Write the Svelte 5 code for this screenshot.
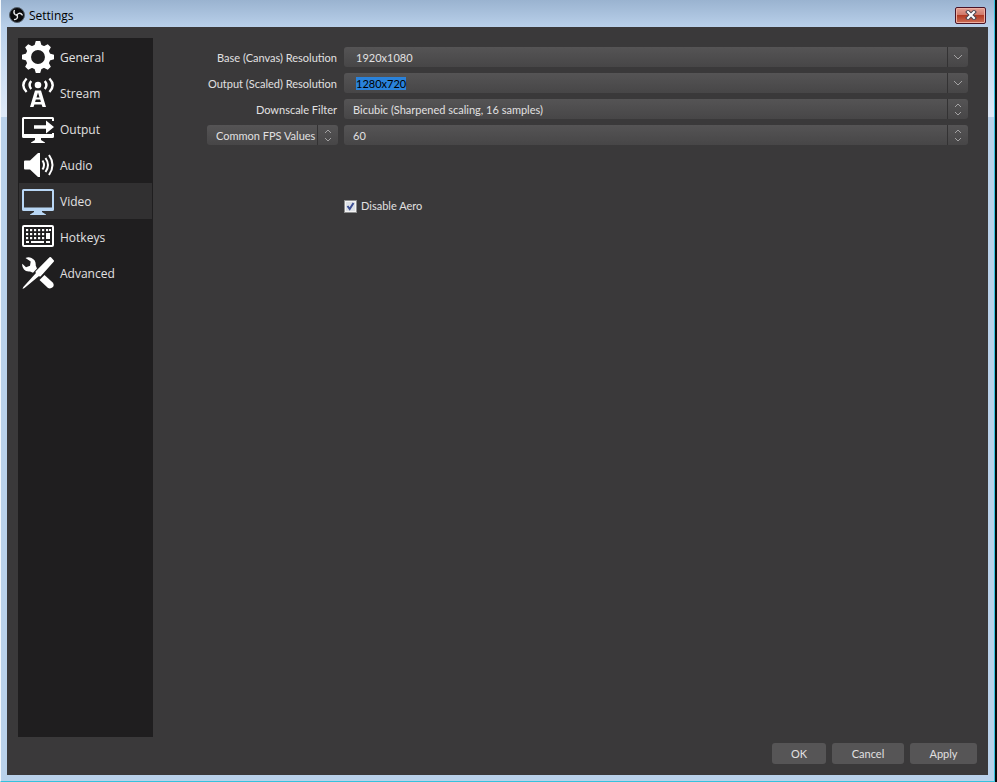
<script lang="ts">
  import { onMount } from 'svelte';

  const sections = ['General', 'Stream', 'Output', 'Audio', 'Video', 'Hotkeys', 'Advanced'];
  const toothAngles = [0, 45, 90, 135, 180, 225, 270, 315];
  const keys = [
    [4, 8], [8, 8], [12, 8], [16, 8], [20, 8], [24, 8],
    [4, 12], [8, 12], [12, 12], [16, 12], [20, 12],
    [4, 16], [8, 16], [12, 16], [16, 16], [20, 16],
  ];

  let active = $state('Video');
  let baseResolution = $state('1920x1080');
  let outputResolution = $state('1280x720');
  let disableAero = $state(true);
  let outputInput: HTMLInputElement;

  onMount(() => {
    outputInput.focus();
    outputInput.select();
  });
</script>

{#snippet chevron()}
  <svg class="arrow" viewBox="0 0 20 20" aria-hidden="true">
    <path d="M6 8l4 4 4-4" />
  </svg>
{/snippet}

{#snippet updown()}
  <svg class="arrow" viewBox="0 0 20 20" aria-hidden="true">
    <path d="M7 8l3-3 3 3M7 13l3 3 3-3" />
  </svg>
{/snippet}

{#snippet icon(name: string)}
  <svg class="icon" viewBox="0 0 32 32" aria-hidden="true">
    {#if name === 'General'}
      <circle cx="16" cy="16" r="9.700" fill="none" stroke="currentColor" stroke-width="5.500" />
      {#each toothAngles as angle (angle)}
        <path d="M13.800 0h4.400l1.800 6h-8z" transform="rotate({angle} 16 16)" />
      {/each}
    {:else if name === 'Stream'}
      <circle cx="16" cy="8" r="3.300" />
      <path
        d="M9.200 4q-3.200 4 0 8M22.800 4q3.200 4 0 8M4.600 1.500q-6.600 6.800 0 13.500M27.400 1.500q6.600 6.800 0 13.500"
        fill="none" stroke="currentColor" stroke-width="2.400"
      />
      <path
        fill-rule="evenodd"
        d="M13 13.500h6L24 30h-3.500l-.9-2.500h-7.200l-.9 2.500H8zM16 15.500l-1.500 5h3zM13.800 22.500l-.7 2.500h5.800l-.7-2.500z"
      />
    {:else if name === 'Output'}
      <path d="M32 8V5.500q0-1.500-1.500-1.500h-29Q0 4 0 5.500v18Q0 25 1.500 25h29q1.500 0 1.500-1.500V20h-2v1H2V6h28v2z" />
      <path d="M12 12.300h12V7.500l8 6.500-8 6.500v-4.800H12z" />
      <path d="M13 25h6v2l4 2.500V30H9v-.5l4-2.500z" />
    {:else if name === 'Audio'}
      <path d="M2 12.500q0-1 1-1h5L16 4h2v24h-2l-8-7.500H3q-1 0-1-1z" />
      <path
        d="M20.500 11.500q3 4.500 0 9M23.500 9q5 7 0 14M27 6q7 10 0 20"
        fill="none" stroke="currentColor" stroke-width="2"
      />
    {:else if name === 'Video'}
      <path fill-rule="evenodd" d="M1.500 4h29Q32 4 32 5.500v19q0 1.500-1.500 1.500h-29Q0 26 0 24.500v-19Q0 4 1.500 4zM2 6v16.500h28V6z" />
      <path d="M12 26h8v1l4 2.500V30H8v-.5l4-2.500z" />
    {:else if name === 'Hotkeys'}
      <rect x="1" y="5" width="30" height="20" rx="1" fill="none" stroke="currentColor" stroke-width="2" />
      {#each keys as [x, y]}
        <rect {x} {y} width="2.200" height="2.200" />
      {/each}
      <path d="M27 8h2v2h-2zM24 12h4v6h-4zM4 20h3v2H4zM9 20h13v2H9zM24 20h4v2h-4z" />
    {:else}
      <path d="M3.500 1Q6.500-.3 9.500 1q4.700 2.200 4.200 7.500l1.300 3-4 4.300-3-1.300q-4 .5-6-2Q-.3 9.500.3 6.800l3.700 3.400 4-1.400.7-4.300z" />
      <path d="M27.500.3q.8-.6 1.500 0l2.700 3q.6.700 0 1.500L18.500 19.500l-1.800-.3L2.500 31l-2 1L1.300 30 13.800 16.300l-.3-1.800z" />
      <path d="M17.500 23l5-5 8.200 7.500q1.800 2.200.3 4.500-2.500 2.200-5 1z" />
    {/if}
  </svg>
{/snippet}

<div class="window">
  <header class="titlebar">
    <svg class="logo" viewBox="0 0 16 16" aria-hidden="true">
      <circle cx="8" cy="8" r="7.500" fill="#0b0b0d" stroke="#55606c" />
      <g fill="none" stroke="#e8e8ea" stroke-width="1.300">
        <path d="M5.500 3q-1.500 3 .5 4.500Q7.500 8.500 9 7.300" />
        <path d="M5.500 3q-1.500 3 .5 4.500Q7.500 8.500 9 7.300" transform="rotate(120 8 8)" />
        <path d="M5.500 3q-1.500 3 .5 4.500Q7.500 8.500 9 7.300" transform="rotate(240 8 8)" />
      </g>
    </svg>
    <h1>Settings</h1>
    <button class="close" type="button" aria-label="Close">
      <svg viewBox="0 0 12 10" aria-hidden="true">
        <path d="M3 2l6 6M9 2L3 8" stroke="#4b4650" stroke-width="4" stroke-linecap="square" />
        <path d="M3 2l6 6M9 2L3 8" stroke="#fff" stroke-width="2" stroke-linecap="square" />
      </svg>
    </button>
  </header>

  <div class="dialog">
    <div class="body">
      <nav>
        {#each sections as name (name)}
          <button
            type="button"
            class:active={active === name}
            aria-current={active === name ? 'page' : undefined}
            onclick={() => (active = name)}
          >
            {@render icon(name)}
            <span>{name}</span>
          </button>
        {/each}
      </nav>

      <form>
        <label for="base">Base (Canvas) Resolution</label>
        <div class="field editable">
          <input id="base" type="text" bind:value={baseResolution} />
          <button type="button" aria-label="Show base resolutions">{@render chevron()}</button>
        </div>

        <label for="output">Output (Scaled) Resolution</label>
        <div class="field editable">
          <input id="output" type="text" bind:value={outputResolution} bind:this={outputInput} />
          <button type="button" aria-label="Show output resolutions">{@render chevron()}</button>
        </div>

        <label for="filter">Downscale Filter</label>
        <div class="field">
          <select id="filter">
            <option>Bicubic (Sharpened scaling, 16 samples)</option>
          </select>
          {@render updown()}
        </div>

        <div class="field">
          <select aria-label="FPS type">
            <option>Common FPS Values</option>
          </select>
          {@render updown()}
        </div>
        <div class="field">
          <select aria-label="FPS">
            <option>60</option>
          </select>
          {@render updown()}
        </div>

        <label class="check">
          <input type="checkbox" bind:checked={disableAero} />
          <span>Disable Aero</span>
        </label>
      </form>
    </div>

    <footer>
      <button type="button" class="ok">OK</button>
      <button type="button" class="cancel">Cancel</button>
      <button type="button">Apply</button>
    </footer>
  </div>
</div>

<style>
  :global(body) { background: #08090b; }
  .window {
    box-sizing: border-box;
    min-height: 100vh;
    display: flex;
    flex-direction: column;
    margin-right: 2px;
    padding: 0 6px 6px;
    border: solid #35c1dd;
    border-width: 0 1px 1px 0;
    border-left: 1px solid #f4f8fc;
    background: linear-gradient(#9ab3d0 0, #b9d0ea 27px, #dfeaf8 117px, #b9d1ea 117px);
    font-family: "Open Sans", "Noto Sans", sans-serif;
    font-size: 12px;
  }
  button, input, select { font: inherit; color: inherit; }
  .titlebar {
    display: flex;
    align-items: center;
    height: 27px;
    padding: 3px 2px 0;
    box-sizing: border-box;
  }
  .logo { width: 16px; height: 16px; }
  h1 {
    flex: 1;
    margin: 0 0 0 4px;
    font-size: 12px;
    font-weight: 400;
    color: #000;
  }
  .close {
    display: grid;
    place-items: center;
    width: 31px;
    height: 17px;
    padding: 0;
    border: 1px solid #4a1426;
    border-radius: 2px;
    box-shadow: inset 0 0 0 1px #eeb0a2;
    background: linear-gradient(#e3a093 0, #d0796a 45%, #b23a22 50%, #cc6f58 100%);
  }
  .close svg { width: 12px; height: 10px; }
  .dialog {
    flex: 1;
    display: flex;
    flex-direction: column;
    gap: 6px;
    padding: 11px;
    background: #3a393a;
  }
  .body { flex: 1; display: flex; }
  nav {
    width: 133px;
    flex-shrink: 0;
    padding: 1px;
    background: #1f1e1f;
  }
  nav button {
    display: flex;
    align-items: center;
    gap: 6px;
    width: 100%;
    height: 36px;
    padding: 0 3px;
    border: none;
    background: none;
    color: #e1e0e1;
    text-align: left;
  }
  nav .active { background: #313031; }
  .icon { width: 32px; height: 32px; fill: currentColor; color: #fff; }
  .active .icon { color: #b9d7f5; }
  form {
    flex: 1;
    display: grid;
    grid-template-columns: 131px 1fr;
    grid-auto-rows: 20px;
    align-content: start;
    gap: 6px;
    padding: 9px 9px 0 54px;
    font-family: Lato, sans-serif;
    font-size: 11px;
    color: #e1e0e1;
  }
  form > label {
    line-height: 22px;
    padding-right: 1px;
    text-align: right;
    white-space: nowrap;
    justify-self: end;
  }
  .field {
    display: grid;
    grid-template-columns: 1fr 20px;
    border-radius: 3px;
    background: linear-gradient(#555455, #474647);
  }
  .field select, .field input {
    appearance: none;
    box-sizing: border-box;
    min-width: 0;
    height: 20px;
    border: none;
    outline: none;
    background: none;
  }
  .field select {
    grid-area: 1 / 1 / 2 / 3;
    padding: 0 0 0 9px;
  }
  .field input { padding: 0 12px; }
  .field input::selection { background: #2a82da; color: #000; }
  option { background: #3a393a; }
  .arrow {
    grid-area: 1 / 2;
    width: 20px;
    height: 20px;
    box-shadow: -1px 0 #333233;
    fill: none;
    stroke: #a3a2a3;
    pointer-events: none;
  }
  .editable button {
    display: grid;
    padding: 0;
    border: none;
    background: none;
  }
  .editable .arrow { grid-area: auto; }
  form .check {
    grid-column: 2;
    justify-self: start;
    display: flex;
    align-items: center;
    gap: 4px;
    margin-top: 45px;
    height: 20px;
    line-height: 24px;
  }
  .check input {
    appearance: none;
    width: 13px;
    height: 13px;
    margin: 0;
    border: 1px solid #8e8f8f;
    box-shadow: inset 0 0 0 1px #f4f4f4;
    background: #d5dae0;
  }
  .check input:checked {
    background: #dde1e6 url("data:image/svg+xml,%3Csvg xmlns='http://www.w3.org/2000/svg' viewBox='0 0 11 11'%3E%3Cpath d='M2.500 5l2.200 3L8.500 2' fill='none' stroke='%233c4f94' stroke-width='2'/%3E%3C/svg%3E");
  }
  footer {
    display: flex;
    justify-content: flex-end;
    gap: 6px;
    font-family: Lato, sans-serif;
    font-size: 11px;
    color: #e1e0e1;
  }
  footer button {
    width: 67px;
    height: 21px;
    padding: 0;
    border: none;
    border-radius: 3px;
    background: #565556;
  }
  footer .ok { width: 54px; }
  footer .cancel { width: 72px; }
</style>
